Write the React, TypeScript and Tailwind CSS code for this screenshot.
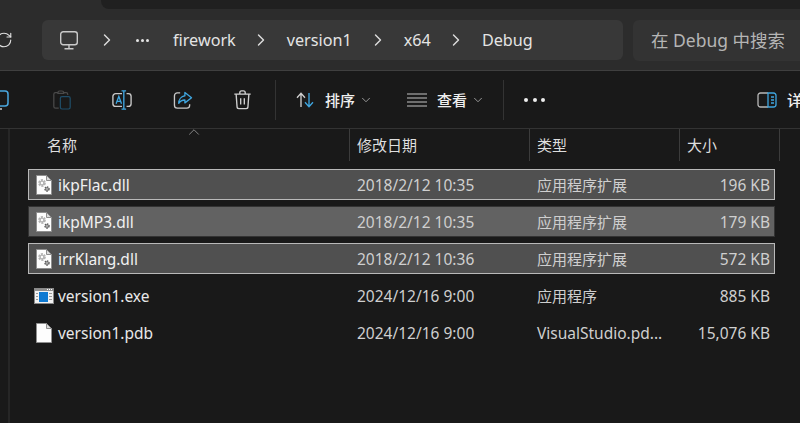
import React from 'react';
import { ChevronRight, ChevronDown, ChevronUp, RotateCw } from 'lucide-react';

const files = [
    { name: 'ikpFlac.dll', date: '2018/2/12 10:35', type: '应用程序扩展', size: '196 KB', kind: 'dll', state: 'selected' },
    { name: 'ikpMP3.dll', date: '2018/2/12 10:35', type: '应用程序扩展', size: '179 KB', kind: 'dll', state: 'hover' },
    { name: 'irrKlang.dll', date: '2018/2/12 10:36', type: '应用程序扩展', size: '572 KB', kind: 'dll', state: 'selected' },
    { name: 'version1.exe', date: '2024/12/16 9:00', type: '应用程序', size: '885 KB', kind: 'exe', state: '' },
    { name: 'version1.pdb', date: '2024/12/16 9:00', type: 'VisualStudio.pd...', size: '15,076 KB', kind: 'pdb', state: '' },
];

const Gear = ({ x, y, r, color }: { x: number; y: number; r: number; color: string }) => (
    <g>
        <circle cx={x} cy={y} r={r} fill="none" stroke={color} strokeWidth={r * 0.6} strokeDasharray={`${r * 0.7} ${r * 0.35}`} />
        <circle cx={x} cy={y} r={r * 0.62} fill="none" stroke={color} strokeWidth={r * 0.45} />
    </g>
);

const FileIcon = ({ kind }: { kind: string }) => {
    if (kind === 'exe') {
        return (
            <svg width="20" height="16" viewBox="0 0 20 16" className="shrink-0">
                <rect x="0.5" y="0.5" width="19" height="15" fill="#f2f2f2" stroke="#8a8a8a" />
                <rect x="1" y="1" width="18" height="2" fill="#8f8f8f" />
                <rect x="13" y="1" width="1" height="1" fill="#fff" />
                <rect x="15" y="1" width="1" height="1" fill="#fff" />
                <rect x="17" y="1" width="1" height="1" fill="#fff" />
                <rect x="5" y="4" width="9" height="10" fill="#0f7ad2" />
                <rect x="2" y="5" width="2" height="1" fill="#999" />
                <rect x="2" y="8" width="2" height="1" fill="#999" />
                <rect x="2" y="11" width="2" height="1" fill="#999" />
                <rect x="15" y="5" width="3" height="1" fill="#999" />
                <rect x="15" y="8" width="3" height="1" fill="#999" />
                <rect x="15" y="11" width="3" height="1" fill="#999" />
            </svg>
        );
    }
    return (
        <svg width="16" height="20" viewBox="0 0 16 20" className="shrink-0">
            <path d="M0.5 0.5H10.5L15.5 5.5V19.5H0.5Z" fill="#fdfdfd" stroke="#8f8f8f" />
            <path d="M10.5 0.5V5.5H15.5Z" fill="#dcdcdc" stroke="#8f8f8f" />
            {kind === 'dll' && (
                <>
                    <Gear x={6} y={8} r={3} color="#b4b4b4" />
                    <Gear x={11} y={14} r={2.1} color="#5c5c5c" />
                </>
            )}
        </svg>
    );
};

const Crumb = ({ label, gap }: { label: string; gap: string }) => (
    <span className={`${gap} text-[16.2px] leading-none text-[#e4e4e4] pt-px`}>{label}</span>
);

const App: React.FC = () => {
    return (
        <div className="w-[800px] h-[423px] overflow-hidden bg-[#191919] text-[#e6e6e6] font-['Noto_Sans','Noto_Sans_CJK_SC',sans-serif] flex flex-col">
            {/* Tab strip */}
            <div className="h-[10px] bg-[#2c2c2c] pl-[101px] shrink-0">
                <div className="h-[9px] bg-[#202020] rounded-bl-lg" />
            </div>

            {/* Address bar */}
            <div className="h-[61px] shrink-0 bg-[#2c2c2c] border-b border-[#3f3f3f] flex items-start pt-[10px]">
                <div className="w-[42px] h-[40px] flex items-center shrink-0 -ml-[10px]">
                    <RotateCw className="w-[18px] h-[18px] text-[#e0e0e0] translate-x-[5px]" strokeWidth={1.5} />
                </div>
                <div className="ml-[10px] w-[581px] h-[40px] bg-[#383838] rounded-md flex items-center pl-[18px]">
                    <svg width="18" height="19" viewBox="0 0 18 19" fill="none" stroke="#c9c9c9" strokeWidth="1.4" className="shrink-0">
                        <rect x="0.7" y="0.7" width="16.6" height="13" rx="2.5" />
                        <path d="M9 14v3.5M4.5 17.8h9" />
                    </svg>
                    <ChevronRight className="ml-[19px] w-[20px] h-[20px] text-[#dcdcdc] shrink-0" strokeWidth={1.7} />
                    <div className="ml-[19px] flex gap-[2px] shrink-0">
                        <div className="w-[3px] h-[3px] rounded-full bg-[#e4e4e4]" />
                        <div className="w-[3px] h-[3px] rounded-full bg-[#e4e4e4]" />
                        <div className="w-[3px] h-[3px] rounded-full bg-[#e4e4e4]" />
                    </div>
                    <Crumb label="firework" gap="ml-[24px]" />
                    <ChevronRight className="ml-[15px] w-[20px] h-[20px] text-[#dcdcdc] shrink-0" strokeWidth={1.7} />
                    <Crumb label="version1" gap="ml-[16px]" />
                    <ChevronRight className="ml-[16px] w-[20px] h-[20px] text-[#dcdcdc] shrink-0" strokeWidth={1.7} />
                    <Crumb label="x64" gap="ml-[16px]" />
                    <ChevronRight className="ml-[15px] w-[20px] h-[20px] text-[#dcdcdc] shrink-0" strokeWidth={1.7} />
                    <Crumb label="Debug" gap="ml-[16px]" />
                </div>
                <div className="ml-[10px] flex-1 h-[41px] bg-[#333333] rounded-l-md flex items-center pl-[18px] text-[17.5px] text-[#b5b5b5] whitespace-nowrap overflow-hidden">
                    在 Debug 中搜索
                </div>
            </div>

            {/* Command bar */}
            <div className="h-[58px] shrink-0 border-b border-[#333333] flex items-center overflow-hidden pt-px">
                <div className="w-[12px] h-[22px] shrink-0 overflow-hidden relative">
                    <svg width="22" height="22" viewBox="0 0 22 22" fill="none" className="absolute right-0 top-0" strokeWidth="1.5">
                        <rect x="4" y="2" width="14" height="15" rx="3" stroke="#4aa8e0" />
                        <path d="M4 17c0 2 1 3 3 3h5" stroke="#c8c8c8" />
                    </svg>
                </div>
                <svg width="18" height="20" viewBox="0 0 22 24" fill="none" className="ml-[41px] shrink-0" strokeWidth="1.5">
                    <path d="M6 3H3a2 2 0 0 0-2 2v15a2 2 0 0 0 2 2h4" stroke="#4a4a4a" />
                    <path d="M6 3a2 2 0 0 1 2-2h3a2 2 0 0 1 2 2v1H6Z M13 3h3a2 2 0 0 1 2 2v1" stroke="#4a4a4a" />
                    <rect x="9" y="8" width="12" height="15" rx="2" stroke="#1f4d68" />
                </svg>
                <svg width="20" height="20" viewBox="0 0 22 22" fill="none" className="ml-[41px] shrink-0" strokeWidth="1.5">
                    <path d="M11 4H4a3 3 0 0 0-3 3v8a3 3 0 0 0 3 3h7" stroke="#c8c8c8" />
                    <path d="M16 4h2a3 3 0 0 1 3 3v8a3 3 0 0 1-3 3h-2" stroke="#c8c8c8" />
                    <path d="M13 1v20M10.5 1h5M10.5 21h5" stroke="#3fa6e0" />
                    <path d="M4.5 15l3-8 3 8M5.5 12.5h4" stroke="#3fa6e0" />
                </svg>
                <svg width="20" height="19" viewBox="0 0 20 20" fill="none" className="ml-[41px] shrink-0" strokeWidth="1.4">
                    <path d="M7 2H4a3 3 0 0 0-3 3v10a3 3 0 0 0 3 3h10a3 3 0 0 0 3-3v-1" stroke="#c8c8c8" />
                    <path d="M12 1.5l7 5.5-7 5.5V9.5c-3 0-5 1-6.5 3.5 0-4 2.5-7.5 6.5-8Z" stroke="#3fa6e0" strokeLinejoin="round" />
                </svg>
                <svg width="19" height="20" viewBox="0 0 20 22" fill="none" stroke="#cfcfcf" className="ml-[40px] shrink-0" strokeWidth="1.5">
                    <path d="M1 4.5h18M7 4.5V3a2 2 0 0 1 2-2h2a2 2 0 0 1 2 2v1.5" />
                    <path d="M3 4.5l1 14a2 2 0 0 0 2 2h8a2 2 0 0 0 2-2l1-14" />
                    <path d="M8 9v7M12 9v7" />
                </svg>
                <div className="ml-[23px] w-px h-[40px] bg-[#333333] shrink-0" />
                <svg width="20" height="16" viewBox="0 0 20 18" fill="none" className="ml-[19px] shrink-0" strokeWidth="1.5">
                    <path d="M5.5 17V2M1 6.5l4.5-5 4.5 5" stroke="#cfcfcf" />
                    <path d="M14.5 1v15M10 11.5l4.5 5 4.5-5" stroke="#3fa6e0" />
                </svg>
                <span className="ml-[10px] text-[15px] leading-none font-medium text-[#efefef] shrink-0">排序</span>
                <ChevronDown className="ml-[4px] w-[14px] h-[14px] text-[#a8a8a8] shrink-0" strokeWidth={1.5} />
                <svg width="20" height="14" viewBox="0 0 20 14" fill="none" stroke="#c4c4c4" className="ml-[34px] shrink-0" strokeWidth="1.2">
                    <path d="M0 1h20M0 5h20M0 9h20M0 13h20" />
                </svg>
                <span className="ml-[10px] text-[15px] leading-none font-medium text-[#efefef] shrink-0">查看</span>
                <ChevronDown className="ml-[4px] w-[14px] h-[14px] text-[#a8a8a8] shrink-0" strokeWidth={1.5} />
                <div className="ml-[18px] w-px h-[40px] bg-[#333333] shrink-0" />
                <div className="ml-[20px] flex gap-[4.5px] shrink-0">
                    <div className="w-1 h-1 rounded-full bg-[#eeeeee]" />
                    <div className="w-1 h-1 rounded-full bg-[#eeeeee]" />
                    <div className="w-1 h-1 rounded-full bg-[#eeeeee]" />
                </div>
                <svg width="20" height="16" viewBox="0 0 20 16" fill="none" className="ml-[212px] shrink-0" strokeWidth="1.3">
                    <path d="M11 1H3.5A2.5 2.5 0 0 0 1 3.5v9A2.5 2.5 0 0 0 3.5 15H11" stroke="#b8b8b8" />
                    <path d="M11 1h5.5A2.5 2.5 0 0 1 19 3.5v9a2.5 2.5 0 0 1-2.5 2.5H11Z" stroke="#3fa6e0" />
                    <path d="M14 5h3M14 8h3M14 11h3" stroke="#3fa6e0" />
                </svg>
                <span className="ml-[10px] text-[15px] leading-none font-medium text-[#efefef] shrink-0">详细信息</span>
            </div>

            {/* File list */}
            <div className="flex-1 flex min-h-0">
                <div className="w-[10px] shrink-0 border-r-2 border-[#262626]" />
                <div className="flex-1 min-w-0 relative">
                    <ChevronUp className="absolute left-[175px] -top-[6px] w-[18px] h-[18px] text-[#a8a8a8]" strokeWidth={1} />
                    <div className="h-[32px] flex text-[15px] text-[#dedede] leading-none">
                        <div className="w-[340px] border-r border-[#3c3c3c] pl-[37px] flex items-center">名称</div>
                        <div className="w-[180px] border-r border-[#3c3c3c] pl-[7px] flex items-center">修改日期</div>
                        <div className="w-[150px] border-r border-[#3c3c3c] pl-[7px] flex items-center">类型</div>
                        <div className="w-[100px] border-r border-[#3c3c3c] pl-[7px] flex items-center">大小</div>
                    </div>
                    <div className="mt-[8px] ml-[18px] w-[747px] flex flex-col gap-[6px]">
                        {files.map((f) => (
                            <div
                                key={f.name}
                                className={
                                    'h-[31px] flex items-center border text-[15.5px] leading-none whitespace-nowrap ' +
                                    (f.state === 'selected'
                                        ? 'bg-[#505050] border-[#b9b9b9]'
                                        : f.state === 'hover'
                                          ? 'bg-[#626262] border-[#333333]'
                                          : 'border-transparent')
                                }
                            >
                                <div className="w-[29px] shrink-0 flex justify-center pl-[1px]">
                                    <FileIcon kind={f.kind} />
                                </div>
                                <div className={'w-[299px] shrink-0 pt-[3px] ' + (f.state ? 'text-[#f0f0f0]' : 'text-[#e8e8e8]')}>{f.name}</div>
                                <div className="w-[180px] shrink-0 pt-[3px] text-[#cfcfcf]">{f.date}</div>
                                <div className={'w-[130px] shrink-0 text-[#cfcfcf] ' + (f.kind === 'pdb' ? 'pt-[3px]' : 'pt-px text-[15px]')}>{f.type}</div>
                                <div className="flex-1 text-right pt-[3px] pr-[4px] text-[#cfcfcf]">{f.size}</div>
                            </div>
                        ))}
                    </div>
                </div>
            </div>
        </div>
    );
};

export default App;
